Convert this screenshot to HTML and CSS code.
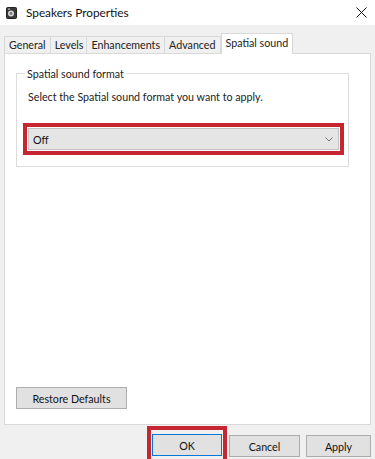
FILE: index.html
```html
<!DOCTYPE html>
<html>
<head>
<meta charset="utf-8">
<link rel="stylesheet" href="styles.css">
</head>
<body>
<div class="window">
  <div class="titlebar">
    <svg class="app-icon" width="11" height="12" viewBox="0 0 11 12">
      <rect x="0.5" y="0.5" width="10" height="11" rx="1" fill="#3a3a3a" stroke="#222"/>
      <circle cx="5" cy="6.5" r="3" fill="#d8d8d8"/>
      <circle cx="5" cy="6.5" r="1.4" fill="#777"/>
      <rect x="2" y="1.5" width="2" height="1.2" fill="#bbb"/>
    </svg>
    <span class="title">Speakers Properties</span>
    <svg class="close" width="11" height="11" viewBox="0 0 11 11">
      <path d="M0.5 0.5 L10.5 10.5 M10.5 0.5 L0.5 10.5" stroke="#111" stroke-width="1" fill="none"/>
    </svg>
  </div>
  <div class="body">
    <div class="tabs">
      <div class="tab">General</div>
      <div class="tab">Levels</div>
      <div class="tab">Enhancements</div>
      <div class="tab">Advanced</div>
      <div class="tab active">Spatial sound</div>
    </div>
    <div class="panel">
      <fieldset class="group">
        <legend>Spatial sound format</legend>
        <p class="desc">Select the Spatial sound format you want to apply.</p>
        <div class="highlight combo-hl">
          <div class="combo">
            <span>Off</span>
            <svg width="8" height="5" viewBox="0 0 8 5"><path d="M0.5 0.5 L4 4 L7.5 0.5" stroke="#777" fill="none"/></svg>
          </div>
        </div>
      </fieldset>
      <div class="spacer"></div>
      <button class="btn restore">Restore Defaults</button>
    </div>
    <div class="footer">
      <div class="highlight ok-hl"><button class="btn ok">OK</button></div>
      <button class="btn cancel">Cancel</button>
      <button class="btn apply">Apply</button>
    </div>
  </div>
</div>
</body>
</html>
```
FILE: styles.css
```css
* { box-sizing: border-box; }
html, body { margin: 0; padding: 0; }
body {
  width: 375px;
  height: 459px;
  overflow: hidden;
  background: #f0f0f0;
  font-family: "Lato", "Open Sans", sans-serif;
  font-size: 10.7px;
  color: #1a1a1a;
}
.window { display: flex; flex-direction: column; height: 459px; }
.window > * { flex-shrink: 0; }
.titlebar {
  height: 25px;
  background: #ffffff;
  display: flex;
  align-items: center;
  padding: 0 8px 0 6px;
}
.app-icon { margin-right: 9px; margin-top: 1px; }
.title { font-size: 11.8px; color: #111; flex: 1; }
.body { flex: 1; display: flex; flex-direction: column; padding: 8px 4px 0 4px; }
.body > * { flex-shrink: 0; }
.tabs { display: flex; align-items: flex-end; height: 20px; position: relative; z-index: 1; }
.tab {
  height: 17px;
  line-height: 16px;
  padding: 0 4px;
  border: 1px solid #d9d9d9;
  border-bottom: none;
  margin-right: -1px;
  background: #f0f0f0;
  color: #222;
}
.tab:nth-child(2) { padding: 0 3px 0 4px; }
.tab.active {
  height: 21px;
  line-height: 17px;
  background: #ffffff;
  margin-bottom: -1px;
  padding: 0 4px;
  margin-left: 1px;
}
.panel {
  height: 372px;
  background: #ffffff;
  border: 1px solid #d9d9d9;
  padding: 13px 21px 13px 11px;
  display: flex;
  flex-direction: column;
}
.group {
  margin: 0;
  padding: 5px 4px 11px 5px;
  border: 1px solid #dcdcdc;
  min-width: 0;
}
.group legend { padding: 0 2px; margin-left: 3px; color: #222; }
.desc { margin: 5px 0 20px 6px; color: #222; }
.highlight { border: 4.5px solid #c62632; padding: 1px; }
.combo-hl { margin-left: 1px; }
.combo {
  height: 22px;
  background: #e5e5e5;
  border: 1px solid #c3c3c3;
  display: flex;
  align-items: center;
  justify-content: space-between;
  padding: 0 5px 0 4px;
  color: #111;
}
.spacer { flex: 1; }
.btn {
  font-family: inherit;
  font-size: 10.7px;
  color: #111;
  background: #e1e1e1;
  border: 1px solid #adadad;
  height: 22px;
  padding: 0;
  margin: 0;
}
.restore { width: 111px; align-self: flex-start; margin-bottom: 2px; }
.footer {
  flex: 1;
  display: flex;
  align-items: flex-start;
  justify-content: flex-end;
  padding-top: 1px;
}
.ok-hl { width: 80px; padding: 4px 1px 0; border-bottom: none; margin-right: 2px; height: 34px; }
.ok { width: 100%; border-color: #0078d7; }
.footer > .btn { margin-top: 9px; }
.cancel { width: 71px; }
.apply { width: 65px; margin-left: 6px; }
```
